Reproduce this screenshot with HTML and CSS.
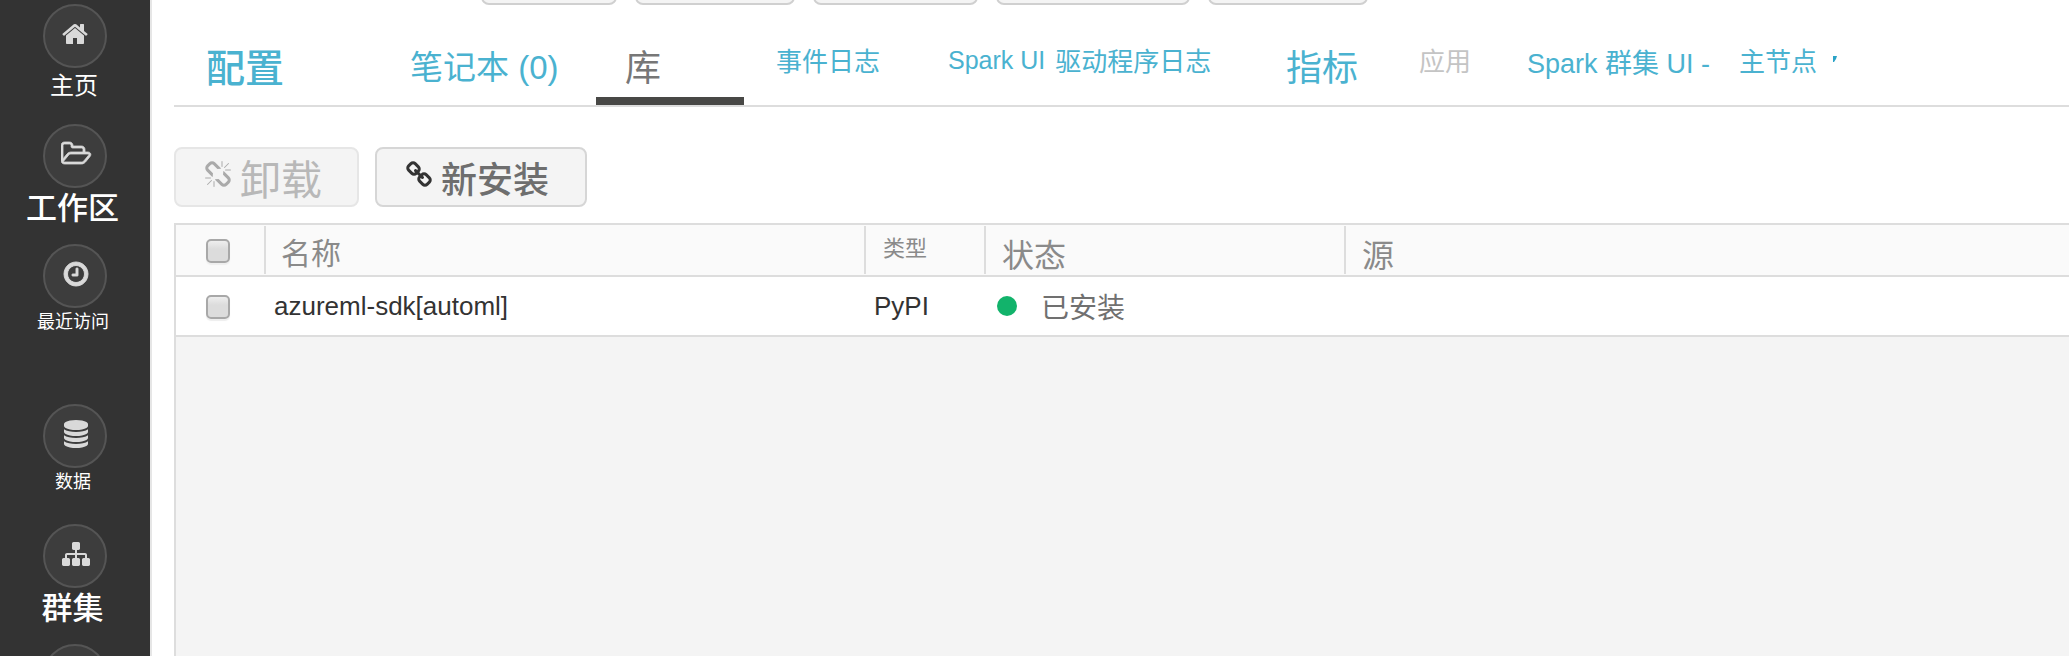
FILE: index.html
```
<!DOCTYPE html>
<html lang="zh-CN">
<head>
<meta charset="utf-8">
<title>库</title>
<link rel="stylesheet" href="styles.css">
</head>
<body>
<div class="app">
  <nav class="sidebar">
    <a class="nav-item" href="#"><span class="disc"><svg class="icon" viewBox="0 0 1792 1792"><path d="M1408 992v480q0 26-19 45t-45 19h-384v-384h-256v384h-384q-26 0-45-19t-19-45v-480q0-1 .5-3t.5-3l575-474 575 474q1 2 1 6zm223-69l-62 74q-8 9-21 11h-3q-13 0-21-7l-692-577-692 577q-12 8-24 7-13-2-21-11l-62-74q-8-10-7-23.5t11-21.5l719-599q32-26 76-26t76 26l244 204v-195q0-14 9-23t23-9h192q14 0 23 9t9 23v408l219 182q10 8 11 21.5t-7 23.5z"/></svg></span><span class="nav-label medium">主页</span></a>
    <a class="nav-item" href="#"><span class="disc"><svg class="icon wide" viewBox="0 0 1920 1792"><path d="M1717 931q0-35-53-35h-1088q-40 0-85.500 21.500t-71.500 52.500l-294 363q-18 24-18 40 0 35 53 35h1088q40 0 86-22t71-53l294-363q18-22 18-39zm-1141-163h768v-160q0-40-28-68t-68-28h-576q-40 0-68-28t-28-68v-64q0-40-28-68t-68-28h-320q-40 0-68 28t-28 68v853l256-315q44-53 116-87.500t140-34.500zm1269 163q0 62-46 120l-295 363q-43 53-116 87.500t-140 34.500h-1088q-92 0-158-66t-66-158v-960q0-92 66-158t158-66h320q92 0 158 66t66 158v32h544q92 0 158 66t66 158v160h192q54 0 99 24.500t67 70.500q15 32 15 68z"/></svg></span><span class="nav-label large">工作区</span></a>
    <a class="nav-item group-end" href="#"><span class="disc"><svg class="icon bold" viewBox="0 0 1792 1792"><path d="M1024 544v448q0 14-9 23t-23 9h-320q-14 0-23-9t-9-23v-64q0-14 9-23t23-9h224v-352q0-14 9-23t23-9h64q14 0 23 9t9 23zm416 352q0-148-73-273t-198-198-273-73-273 73-198 198-73 273 73 273 198 198 273 73 273-73 198-198 73-273zm224 0q0 209-103 385.500t-279.500 279.500-385.500 103-385.500-103-279.500-279.500-103-385.500 103-385.500 279.500-279.500 385.500-103 385.500 103 279.500 279.500 103 385.500z"/></svg></span><span class="nav-label">最近访问</span></a>
    <a class="nav-item" href="#"><span class="disc"><svg class="icon" viewBox="0 0 1792 1792"><path d="M896 768q237 0 443-43t325-127v170q0 69-103 128t-280 93.500-385 34.500-385-34.500-280-93.500-103-128v-170q119 84 325 127t443 43zm0 768q237 0 443-43t325-127v170q0 69-103 128t-280 93.500-385 34.500-385-34.500-280-93.500-103-128v-170q119 84 325 127t443 43zm0-384q237 0 443-43t325-127v170q0 69-103 128t-280 93.500-385 34.500-385-34.500-280-93.500-103-128v-170q119 84 325 127t443 43zm0-1152q208 0 385 34.500t280 93.500 103 128v128q0 69-103 128t-280 93.500-385 34.500-385-34.500-280-93.500-103-128v-128q0-69 103-128t280-93.500 385-34.500z"/></svg></span><span class="nav-label">数据</span></a>
    <a class="nav-item" href="#"><span class="disc"><svg class="icon" viewBox="0 0 1792 1792"><path d="M1792 1248v320q0 40-28 68t-68 28h-320q-40 0-68-28t-28-68v-320q0-40 28-68t68-28h96v-192h-512v192h96q40 0 68 28t28 68v320q0 40-28 68t-68 28h-320q-40 0-68-28t-28-68v-320q0-40 28-68t68-28h96v-192h-512v192h96q40 0 68 28t28 68v320q0 40-28 68t-68 28h-320q-40 0-68-28t-28-68v-320q0-40 28-68t68-28h96v-192q0-52 38-90t90-38h512v-192h-96q-40 0-68-28t-28-68v-320q0-40 28-68t68-28h320q40 0 68 28t28 68v320q0 40-28 68t-68 28h-96v192h512q52 0 90 38t38 90v192h96q40 0 68 28t28 68z"/></svg></span><span class="nav-label large">群集</span></a>
    <a class="nav-item" href="#"><span class="disc"></span></a>
  </nav>

  <main class="main">
    <div class="actions">
      <button class="action"></button>
      <button class="action"></button>
      <button class="action"></button>
      <button class="action"></button>
      <button class="action"></button>
    </div>

    <nav class="tabs">
      <a class="tab size-xl" href="#">配置</a>
      <a class="tab size-lg" href="#">笔记本 (0)</a>
      <a class="tab size-lg active" href="#">库</a>
      <a class="tab size-sm" href="#">事件日志</a>
      <a class="tab size-sm" href="#"><span class="latin">Spark UI</span>驱动程序日志</a>
      <a class="tab size-lg metrics" href="#">指标</a>
      <a class="tab size-sm disabled" href="#">应用</a>
      <a class="tab size-md" href="#">Spark 群集 UI -</a>
      <a class="tab size-sm" href="#">主节点<svg class="caret" viewBox="0 0 4 6"><path d="M0 0H4L3 3L1 6H0Z"/></svg></a>
    </nav>

    <div class="toolbar">
      <button class="btn uninstall" disabled><svg class="btn-icon" viewBox="0 0 1792 1792"><path d="M503 1271l-256 256q-10 9-23 9-12 0-23-9-9-10-9-23t9-23l256-256q10-9 23-9t23 9q9 10 9 23t-9 23zm169 41v320q0 14-9 23t-23 9-23-9-9-23v-320q0-14 9-23t23-9 23 9 9 23zm-224-224q0 14-9 23t-23 9h-320q-14 0-23-9t-9-23 9-23 23-9h320q14 0 23 9t9 23zm1264 128q0 120-85 203l-147 146q-83 83-203 83-121 0-204-85l-334-335q-21-21-42-56l239-18 273 274q28 28 68 27.500t68-27.500l147-146q28-28 28-67 0-40-28-68l-274-275 18-239q35 21 56 42l336 336q84 86 84 204zm-617-724l-239 18-273-274q-28-28-68-28-39 0-68 27l-147 146q-28 28-28 67 0 40 28 68l274 274-18 240q-35-21-56-42l-336-336q-84-86-84-204 0-120 85-203l147-146q83-83 203-83 121 0 204 85l334 335q21 21 42 56zm633 84q0 14-9 23t-23 9h-320q-14 0-23-9t-9-23 9-23 23-9h320q14 0 23 9t9 23zm-544-544v320q0 14-9 23t-23 9-23-9-9-23v-320q0-14 9-23t23-9 23 9 9 23zm407 151l-256 256q-11 9-23 9t-23-9q-9-10-9-23t9-23l256-256q10-9 23-9t23 9q9 10 9 23t-9 23z"/></svg><span class="btn-text">卸载</span></button>
      <button class="btn install"><svg class="btn-icon" viewBox="0 0 1792 1792"><path d="M1520 1216q0-40-28-68l-208-208q-28-28-68-28-42 0-72 32 3 3 19 18.500t21.500 21.500 15 19 13 25.500 3.500 27.500q0 40-28 68t-68 28q-15 0-27.500-3.500t-25.500-13-19-15-21.500-21.500-18.500-19q-33 31-33 73 0 40 28 68l206 207q27 27 68 27 40 0 68-26l147-146q28-28 28-67zm-703-705q0-40-28-68l-206-207q-28-28-68-28-39 0-68 27l-147 146q-28 28-28 67 0 40 28 68l208 208q27 27 68 27 42 0 72-31-3-3-19-18.500t-21.500-21.500-15-19-13-25.500-3.500-27.500q0-40 28-68t68-28q15 0 27.500 3.500t25.500 13 19 15 21.500 21.500 18.500 19q33-31 33-73zm895 705q0 120-85 203l-147 146q-83 83-203 83-121 0-204-85l-206-207q-83-83-83-203 0-123 88-209l-88-88q-86 88-208 88-120 0-204-84l-208-208q-84-84-84-204t85-203l147-146q83-83 203-83 121 0 204 85l206 207q83 83 83 203 0 123-88 209l88 88q86-88 208-88 120 0 204 84l208 208q84 84 84 204z"/></svg><span class="btn-text">新安装</span></button>
    </div>

    <div class="panel">
      <table class="grid">
        <colgroup><col class="col-check"><col class="col-name"><col class="col-type"><col class="col-status"><col></colgroup>
        <thead>
          <tr>
            <th class="check-cell"><input class="check" type="checkbox" aria-labelledby="name-head"></th>
            <th><div class="head" id="name-head">名称</div></th>
            <th><div class="head type">类型</div></th>
            <th><div class="head big">状态</div></th>
            <th><div class="head big">源</div></th>
          </tr>
        </thead>
        <tbody>
          <tr>
            <td class="check-cell"><input class="check" type="checkbox" aria-labelledby="lib-name"></td>
            <td id="lib-name">azureml-sdk[automl]</td>
            <td>PyPI</td>
            <td><div class="status"><span class="dot"></span>已安装</div></td>
            <td></td>
          </tr>
        </tbody>
      </table>
    </div>
  </main>
</div>
</body>
</html>
```
FILE: styles.css
```
* {
  box-sizing: border-box;
}

body {
  margin: 0;
  background: #fff;
  font-family: "Liberation Sans", "Noto Sans CJK SC", sans-serif;
  color: #333;
}

a {
  text-decoration: none;
}

.app {
  display: flex;
  height: 100vh;
  overflow: hidden;
}

/* Sidebar */

.sidebar {
  flex: none;
  width: 152px;
  padding-top: 4px;
  background: #333;
  border-right: 2px solid #e6e6e6;
  overflow: hidden;
}

.nav-item {
  display: flex;
  flex-direction: column;
  align-items: center;
  height: 120px;
  color: #fff;
}

.group-end {
  margin-bottom: 40px;
}

.disc {
  flex: none;
  display: flex;
  justify-content: center;
  width: 64px;
  height: 64px;
  padding: 14px 0 0 2px;
  border: 2px solid #555;
  border-radius: 50%;
  background: #3d3d3d;
}

.icon {
  width: 28px;
  height: 28px;
  fill: #d9d9d9;
}

.icon.wide {
  width: 32px;
  margin-left: 2px;
  stroke: #d9d9d9;
  stroke-width: 50;
}

.icon.bold {
  stroke: #d9d9d9;
  stroke-width: 60;
}

.nav-label {
  padding-right: 4px;
  font-size: 18px;
  line-height: 29px;
  white-space: nowrap;
}

.nav-label.medium {
  padding-right: 2px;
  font-size: 24px;
  line-height: 35px;
}

.nav-label.large {
  padding-right: 5px;
  font-size: 31px;
  font-weight: 500;
  line-height: 41px;
}

/* Main column */

.main {
  flex: 1;
  min-width: 0;
  display: flex;
  flex-direction: column;
  padding-left: 22px;
}

.actions {
  flex: none;
  display: flex;
  align-items: flex-end;
  gap: 18px;
  height: 5px;
  padding-left: 307px;
  overflow: hidden;
}

.action {
  flex: none;
  width: 160px;
  height: 60px;
  padding: 0;
  border: 2px solid #d0d0d0;
  border-radius: 8px;
  background: #f4f4f4;
}

.action:nth-child(1) {
  width: 136px;
}

.action:nth-child(3) {
  width: 165px;
}

.action:nth-child(4) {
  width: 194px;
}

.tabs {
  flex: none;
  display: grid;
  grid-template-columns: 204px 186px 180px 172px 338px 133px 108px 212px auto;
  height: 102px;
  padding: 20px 0 0 32px;
  border-bottom: 2px solid #ddd;
}

.tab {
  display: flex;
  align-items: center;
  color: #4ab2d0;
  white-space: nowrap;
}

.size-xl {
  font-size: 39px;
  font-weight: 500;
}

.size-lg {
  font-size: 33px;
}

.size-md {
  padding-bottom: 8px;
  font-size: 27px;
}

.size-sm {
  padding-bottom: 12px;
  font-size: 26px;
}

.metrics {
  font-size: 36px;
}

.latin {
  margin: 3px 10px 0 0;
  font-size: 25px;
}

.tab.active {
  width: 148px;
  padding: 8px 0 0 29px;
  border-bottom: 8px solid #484846;
  color: #777;
  font-size: 36px;
}

.tab.disabled {
  color: #c4c4c4;
}

.caret {
  width: 4px;
  height: 6px;
  margin-left: 16px;
  fill: #2ba3c7;
}

/* Toolbar */

.toolbar {
  flex: none;
  display: flex;
  gap: 16px;
  padding: 40px 0 16px;
}

.btn {
  display: flex;
  align-items: center;
  height: 60px;
  padding: 0 36px 0 28px;
  border: 2px solid #d6d6d6;
  border-radius: 8px;
  background: #f4f4f4;
  color: #6e6e6e;
  font-family: inherit;
  font-size: 36px;
  font-weight: 500;
  line-height: 48px;
}

.btn-icon {
  width: 28px;
  height: 28px;
  margin: 0 8px 4px 0;
  fill: #333;
}

.btn-text {
  padding-top: 7px;
}

.uninstall {
  padding-right: 35px;
  border-color: #e6e6e6;
  color: #b8b8b8;
  font-size: 41px;
  font-weight: 400;
}

.uninstall .btn-icon {
  fill: #aaa;
}

/* Library table */

.panel {
  flex: 1;
  border: 2px solid #ddd;
  border-right: 0;
  border-bottom: 0;
  background: #f4f4f4;
}

.grid {
  width: 100%;
  border-collapse: separate;
  border-spacing: 0;
  table-layout: fixed;
}

.col-check {
  width: 88px;
}

.col-name {
  width: 600px;
}

.col-type {
  width: 120px;
}

.col-status {
  width: 360px;
}

th {
  height: 52px;
  padding: 1px 0;
  border-bottom: 2px solid #ddd;
  background: #fafafa;
  color: #8a8a8a;
  font-weight: 400;
  text-align: left;
}

td {
  height: 60px;
  padding: 0 10px;
  border-bottom: 2px solid #ddd;
  background: #fff;
  font-size: 26px;
  white-space: nowrap;
}

.head {
  display: flex;
  align-items: center;
  height: 48px;
  padding: 1px 0 0 15px;
  border-left: 2px solid #ddd;
  font-size: 30px;
}

.head.type {
  padding: 0 0 8px 17px;
  font-size: 22px;
}

.head.big {
  padding-top: 5px;
  padding-left: 16px;
  font-size: 32px;
}

.check-cell {
  padding: 1px 0 0 30px;
}

.check {
  appearance: none;
  display: block;
  width: 24px;
  height: 24px;
  margin: 0;
  border: 2px solid #a8a8a8;
  border-radius: 5px;
  background: linear-gradient(#eee, #dcdcdc 40%);
  box-shadow: 0 2px 1px #eee;
}

.status {
  display: flex;
  align-items: center;
  gap: 24px;
  padding-left: 3px;
  color: #707070;
  font-size: 28px;
}

.dot {
  width: 20px;
  height: 20px;
  border-radius: 50%;
  background: #12b36b;
}
```
